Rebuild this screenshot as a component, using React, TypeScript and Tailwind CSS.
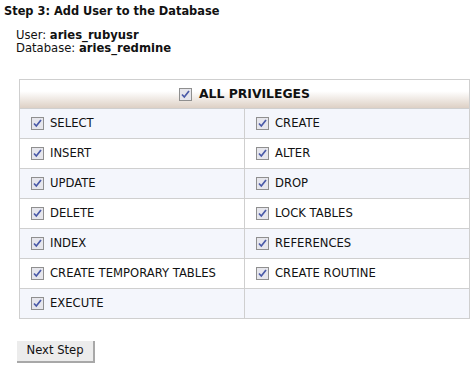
const rows: [string, string][] = [
  ["SELECT", "CREATE"],
  ["INSERT", "ALTER"],
  ["UPDATE", "DROP"],
  ["DELETE", "LOCK TABLES"],
  ["INDEX", "REFERENCES"],
  ["CREATE TEMPORARY TABLES", "CREATE ROUTINE"],
  ["EXECUTE", ""],
];

function Check() {
  return (
    <span className="inline-flex h-[13px] w-[13px] shrink-0 items-center justify-center border border-[#8f8f8f] bg-[#e6e6ec]">
      <svg width="9" height="9" viewBox="0 0 9 9">
        <path d="M1 4.5 L3.3 7 L8 1" fill="none" stroke="#4a5aa8" strokeWidth="1.7" />
      </svg>
    </span>
  );
}

function Cell({ label }: { label: string }) {
  return (
    <div className="flex h-[29px] items-center gap-[6px] px-[11px]">
      {label && <Check />}
      {label && <span>{label}</span>}
    </div>
  );
}

export default function App() {
  return (
    <div className="h-[372px] w-[475px] bg-white font-['DejaVu_Sans',Verdana,sans-serif] text-[11.6px] text-[#111]">
      <h1 className="pl-[4px] pt-[4px] text-[11.4px] font-bold leading-[15px]">Step 3: Add User to the Database</h1>

      <div className="mt-[10px] pl-[16px] leading-[13px]">
        <div>
          User: <b>aries_rubyusr</b>
        </div>
        <div>
          Database: <b>aries_redmine</b>
        </div>
      </div>

      <div className="ml-[19px] mt-[24px] w-[451px] border border-[#cfcfcf]">
        <div className="flex h-[28px] items-center justify-center gap-[7px] bg-gradient-to-b from-white from-40% to-[#ddd0c5] text-[12.4px] font-bold">
          <Check />
          <span>ALL PRIVILEGES</span>
        </div>
        {rows.map(([a, b], i) => (
          <div
            key={i}
            className={`grid grid-cols-[225px_1fr] border-t border-[#cfcfcf] ${i % 2 === 0 ? "bg-[#f4f6fc]" : "bg-white"}`}
          >
            <div className="border-r border-[#cfcfcf]">
              <Cell label={a} />
            </div>
            <Cell label={b} />
          </div>
        ))}
      </div>

      <button className="ml-[17px] mt-[22px] h-[22px] w-[78px] border-b-2 border-r-2 border-[#a8a8a8] bg-[#ececec] text-[11.6px]">
        Next Step
      </button>
    </div>
  );
}
